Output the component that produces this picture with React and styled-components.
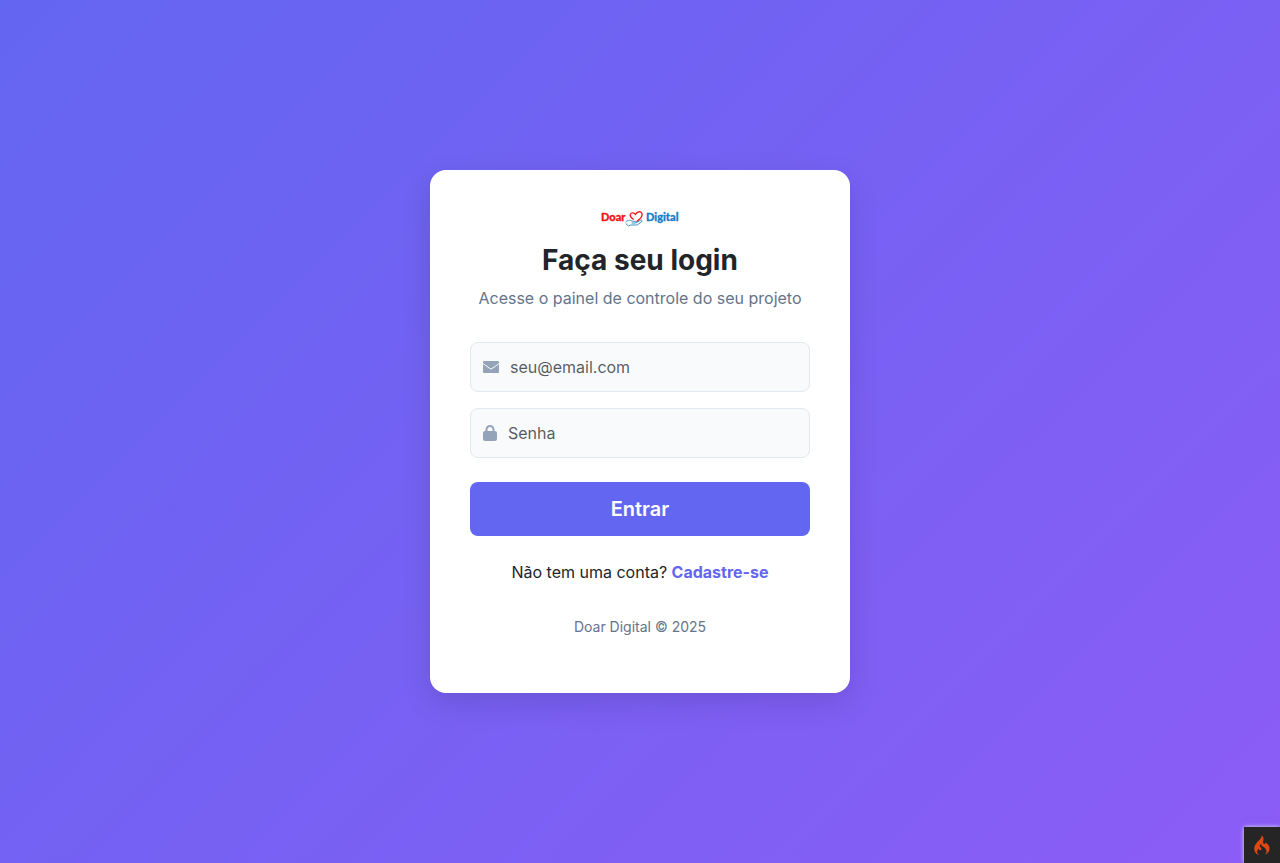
import React from "react";
import styled, { createGlobalStyle } from "styled-components";
import { FaLock } from "react-icons/fa6";

const GlobalStyle = createGlobalStyle`
  *, *::before, *::after { box-sizing: border-box; }
  body {
    margin: 0;
    font-family: Inter, "Open Sans", sans-serif;
    font-size: 16px;
    line-height: 24px;
    color: #212529;
  }
`;

const Page = styled.main`
  min-height: 100vh;
  display: flex;
  align-items: center;
  justify-content: center;
  background: linear-gradient(135deg, #6366f1, #8b5cf6);
`;

const Card = styled.section`
  width: 100%;
  max-width: 420px;
  padding: 40px 40px 56px;
  border-radius: 16px;
  background: #fff;
  box-shadow: 0 10px 30px rgba(0, 0, 0, 0.12);
  text-align: center;
`;

const Logo = styled.svg`
  display: block;
  width: 80px;
  height: 17px;
  margin: 0 auto 16px;
  font-family: Lato, sans-serif;
  font-size: 11px;
  font-weight: 900;
`;

const LogoText = styled.text`
  fill: ${({ $color }) => $color};
  stroke: ${({ $color }) => $color};
  stroke-width: 0.3;
`;

const Title = styled.h1`
  margin: 0 0 8px;
  font-size: 28px;
  line-height: 35px;
  font-weight: 700;
`;

const Subtitle = styled.p`
  margin: 0 0 32px;
  color: #64748b;
`;

const Form = styled.form`
  display: flex;
  flex-direction: column;
  gap: 16px;
`;

const Field = styled.label`
  display: flex;
  align-items: center;
  gap: 11px;
  height: 50px;
  padding: 0 12px;
  border: 1px solid #e2e8f0;
  border-radius: 8px;
  background: #f8fafc;
  color: #94a3b8;

  svg {
    flex: none;
    width: ${({ $iconWidth }) => $iconWidth}px;
    height: 16px;
  }
`;

const Input = styled.input`
  flex: 1;
  min-width: 0;
  padding: 0;
  border: 0;
  outline: 0;
  background: transparent;
  color: #212529;
  font: inherit;

  &::placeholder { color: rgba(33, 37, 41, 0.75); opacity: 1; }
`;

const SubmitButton = styled.button`
  height: 54px;
  margin-top: 8px;
  border: 0;
  border-radius: 8px;
  background: #6366f1;
  color: #fff;
  font-family: inherit;
  font-size: 20px;
  line-height: 30px;
  font-weight: 600;
  cursor: pointer;
`;

const SignUp = styled.p`
  margin: 24px 0 32px;
`;

const SignUpLink = styled.a`
  color: #6366f1;
  font-weight: 700;
  text-decoration: none;
`;

const Footer = styled.footer`
  color: #64748b;
  font-size: 14px;
  line-height: 21px;
`;

const DebugToggle = styled.button`
  position: fixed;
  right: 0;
  bottom: 0;
  display: flex;
  align-items: center;
  justify-content: center;
  width: 36px;
  height: 36px;
  padding: 0;
  border: 0;
  background: #252525;
  box-shadow: 0 0 4px #dfdfdf;
  cursor: pointer;
`;

function BrandLogo() {
  return (
    <Logo viewBox="0 0 80 17" role="img" aria-label="Doar Digital">
      <LogoText x="1" y="11" $color="#f01414">Doar</LogoText>
      <LogoText x="46" y="11" $color="#1680c6">Digital</LogoText>
      <path
        d="M33.2 9.2C31.4 8 30 6.6 30.2 4.8C30.6 2.6 34 2.2 35.6 4.6C36.6 2 39 1.2 41 2.2C43.2 3.6 42 6.6 40.2 8.4L37 11.2"
        fill="none" stroke="#f01414" strokeWidth="1.3" strokeLinecap="round" strokeLinejoin="round"
      />
      <path
        d="M25.8 11.8C28 9.6 30 10 32 11.2L35.5 11.4C37 11.7 36.5 13 35 13H32M36.5 12.8L40.5 10.2C42 9.6 42.6 10.8 41.6 11.8L37.5 14.8C35 15.6 31 14 28.5 16L26 13.8"
        fill="none" stroke="#3f94c8" strokeWidth="1" strokeLinecap="round" strokeLinejoin="round"
      />
    </Logo>
  );
}

function EnvelopeIcon() {
  return (
    <svg viewBox="0 0 16 16" aria-hidden="true">
      <rect x="0" y="2" width="16" height="12" rx="1" fill="currentColor" />
      <path d="M0 4.5L7 9.6Q8 10.2 9 9.6L16 4.5" fill="none" stroke="#f8fafc" strokeWidth="1" />
    </svg>
  );
}

function FlameIcon() {
  return (
    <svg width="16" height="20" viewBox="0 0 155 200" aria-hidden="true">
      <path
        fill="#dd4814"
        d="M73.7 3.7c2.2 7.9-.7 18.5-7.8 29-1.8 2.6-10.7 12.2-19.7 21.3-23.9 24-33.6 37.1-40.3 54.4-7.9 20.6-7.8 40.8.5 58.2C12.8 180 27.6 193 42.5 198l6 2-3-2.2c-21-15.2-22.9-38.7-4.8-58.8 2.5-2.7 4.8-5 5.1-5 .4 0 .7 2.7.7 6.1 0 5.7.2 6.2 3.7 9.5 3 2.7 4.6 3.4 7.8 3.4 5.6 0 9.9-2.4 11.6-6.5 2.9-6.9 1.6-12-5-20.5-10.5-13.4-11.7-23.3-4.3-34.7l3.1-4.8.7 4.7c1.3 8.2 5.8 12.9 25 25.8 20.9 14.1 30.6 26.1 32.8 40.5 1.1 7.2-.1 16.1-3.1 21.8-2.7 5.3-11.2 14.3-16.5 17.4-2.4 1.4-4.3 2.6-4.3 2.8 0 .2 2.4-.4 5.3-1.4 24.1-8.3 42.7-27.1 48.2-48.6 1.9-7.6 1.9-20.2-.1-28.5-3.5-15.2-14.6-30.5-29.9-41.2l-7-4.9-.6 3.3c-.8 4.8-2.6 7.6-5.9 9.3-4.5 2.3-10.3 1.9-13.8-1-6.7-5.7-7.8-14.6-3.7-30.5 3-11.6 3.2-20.6.5-29.1C88.3 18 80.6 6.3 74.8 2.2 73.1.9 73 1 73.7 3.7z"
      />
    </svg>
  );
}

export default function App() {
  return (
    <>
      <GlobalStyle />
      <Page>
        <Card>
          <BrandLogo />
          <Title>Faça seu login</Title>
          <Subtitle>Acesse o painel de controle do seu projeto</Subtitle>
          <Form onSubmit={(event) => event.preventDefault()}>
            <Field $iconWidth={16}>
              <EnvelopeIcon />
              <Input type="email" name="email" placeholder="seu@email.com" aria-label="E-mail" />
            </Field>
            <Field $iconWidth={14}>
              <FaLock aria-hidden="true" />
              <Input type="password" name="password" placeholder="Senha" aria-label="Senha" />
            </Field>
            <SubmitButton type="submit">Entrar</SubmitButton>
          </Form>
          <SignUp>
            Não tem uma conta? <SignUpLink href="#cadastro">Cadastre-se</SignUpLink>
          </SignUp>
          <Footer>Doar Digital © 2025</Footer>
        </Card>
      </Page>
      <DebugToggle type="button" aria-label="Debug">
        <FlameIcon />
      </DebugToggle>
    </>
  );
}
